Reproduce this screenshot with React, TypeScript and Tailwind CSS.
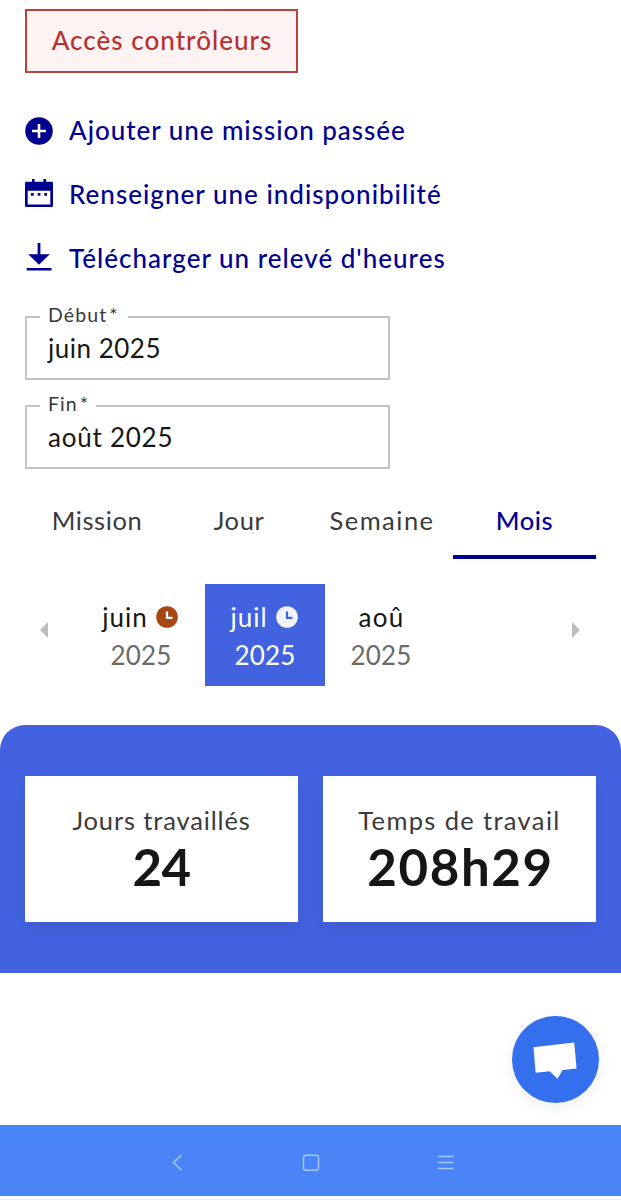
import React from "react";

function PlusCircle() {
  return (
    <svg width="28" height="28" viewBox="0 0 28 28">
      <circle cx="14" cy="14" r="13.8" fill="#000091" />
      <path d="M14 7v14M7 14h14" stroke="#fff" strokeWidth="2.6" />
    </svg>
  );
}

function CalendarIcon() {
  return (
    <svg className="-mt-[4px]" width="28" height="28" viewBox="0 0 28 28" fill="#000091">
      <path
        fillRule="evenodd"
        d="M7 0h2.600v2.800h8.800V0H21v2.800h5.700A1.300 1.300 0 0 1 28 4.100V26.700A1.300 1.300 0 0 1 26.700 28H1.300A1.300 1.300 0 0 1 0 26.700V4.100A1.300 1.300 0 0 1 1.300 2.800H7zM2.700 11.800v13.600h22.600V11.800z"
      />
      <path d="M6 14h2.700v2.700H6zM12.700 14h2.700v2.700h-2.700zM19.300 14H22v2.700h-2.700z" />
    </svg>
  );
}

function DownloadIcon() {
  return (
    <svg className="-mt-[4px]" width="28" height="28" viewBox="0 0 28 28" fill="#000091">
      <path d="M12.600 0h2.800v11.200h9.400L14 21.800 3.200 11.200h9.400zM1.700 25h24.800v2.600H1.700z" />
    </svg>
  );
}

function ClockIcon({ disc, hand }: { disc: string; hand: string }) {
  return (
    <svg width="22" height="22" viewBox="0 0 22 22">
      <circle cx="11" cy="11" r="10.8" fill={disc} />
      <path d="M11 5.5v6.400h5.400" fill="none" stroke={hand} strokeWidth="2.2" />
    </svg>
  );
}

const links = [
  { label: "Ajouter une mission passée", icon: <PlusCircle />, spacing: "tracking-[0.96px]" },
  { label: "Renseigner une indisponibilité", icon: <CalendarIcon />, spacing: "tracking-[1.02px]" },
  { label: "Télécharger un relevé d'heures", icon: <DownloadIcon />, spacing: "tracking-[1.01px]" },
];

function MonthField({ label, value, labelWidth, valueSpacing }: { label: string; value: string; labelWidth: string; valueSpacing: string }) {
  return (
    <div className="relative flex h-16 w-[365px] items-center border-2 border-[#c3c3c3] pl-[21px]">
      <span className={`absolute -top-[17px] left-[13px] h-7 bg-white pl-2 text-[19.5px] leading-7 tracking-[1.1px] text-[#3a3a3a] ${labelWidth}`}>
        {label}
        <span className="ml-0.5">*</span>
      </span>
      <span className={`text-[26px] leading-8 text-[#161616] ${valueSpacing}`}>{value}</span>
    </div>
  );
}

function Stat({ label, value, labelSpacing, valueSpacing }: { label: string; value: string; labelSpacing: string; valueSpacing: string }) {
  return (
    <div className="flex h-[146px] w-[273px] flex-col items-center bg-white pt-[26px] shadow-[0_9px_20px_rgba(0,0,18,0.07)]">
      <div className={`text-[25.5px] leading-[36px] text-[#3a3a3a] ${labelSpacing}`}>{label}</div>
      <div className={`text-[51px] leading-[58px] font-bold text-[#161616] ${valueSpacing}`}>{value}</div>
    </div>
  );
}

export default function App() {
  return (
    <div className="flex h-[1200px] w-[621px] flex-col overflow-hidden bg-white font-['Lato','Noto_Sans',sans-serif] whitespace-nowrap">
      <main className="relative flex h-[1125px] flex-col">
        <button className="mt-[9px] ml-[25px] flex h-16 w-[273px] items-center justify-center border-2 border-[#b5433f] bg-[#fcf3f2] pb-0.5 pl-px text-[26px] font-medium tracking-[1.02px] text-[#b5322f]">
          Accès contrôleurs
        </button>

        <nav className="mt-[26px] ml-[25px] flex flex-col">
          {links.map((l) => (
            <a key={l.label} className="flex h-16 items-center gap-4 text-[26px] font-medium text-[#000091]">
              {l.icon}
              <span className={`pb-px ${l.spacing}`}>{l.label}</span>
            </a>
          ))}
        </nav>

        <div className="mt-[25px] ml-[25px] flex flex-col gap-[25px]">
          <MonthField label="Début" value="juin 2025" labelWidth="w-[88px]" valueSpacing="tracking-[0.5px]" />
          <MonthField label="Fin" value="août 2025" labelWidth="w-[56px]" valueSpacing="tracking-[0.75px]" />
        </div>

        <div className="mx-[25px] mt-[13px] flex h-[77px] text-[25.5px] text-[#3a3a3a]">
          <div className="flex w-[143px] items-center justify-center pl-px tracking-[0.6px]">Mission</div>
          <div className="flex w-[142px] items-center justify-center tracking-[0.6px]">Jour</div>
          <div className="flex w-[143px] items-center justify-center pl-px tracking-[1.5px]">Semaine</div>
          <div className="flex w-[143px] items-center justify-center border-b-4 border-[#000091] pt-1 font-medium tracking-[0.6px] text-[#000091]">
            Mois
          </div>
        </div>

        <div className="mt-[25px] flex h-[102px] items-center pl-[39px] text-[26px] leading-[38px]">
          <svg className="-mt-[10px]" width="10" height="16" viewBox="0 0 10 16">
            <path d="M9 0v16L1 8z" fill="#bdbdbd" />
          </svg>
          <div className="ml-[35px] flex w-[113px] flex-col items-center pt-px">
            <div className="flex items-center gap-2 pr-px text-[#161616]">
              <span className="tracking-[1px]">juin</span>
              <ClockIcon disc="#a94616" hand="#fff" />
            </div>
            <span className="pl-px tracking-[0.2px] text-[#6a6a6a]">2025</span>
          </div>
          <div className="ml-2 flex h-[102px] w-[120px] flex-col items-center justify-center bg-[#4262e0] pt-px text-white">
            <div className="flex items-center gap-2 pr-0.5">
              <span className="tracking-[1px]">juil</span>
              <ClockIcon disc="#f2f4fd" hand="#4262e0" />
            </div>
            <span className="tracking-[0.2px]">2025</span>
          </div>
          <div className="ml-2 flex w-[96px] flex-col items-center pt-px">
            <span className="pl-px tracking-[1.2px] text-[#161616]">aoû</span>
            <span className="tracking-[0.2px] text-[#6a6a6a]">2025</span>
          </div>
          <svg className="-mt-[10px] ml-[142px]" width="10" height="16" viewBox="0 0 10 16">
            <path d="M1 0v16l8-8z" fill="#bdbdbd" />
          </svg>
        </div>

        <section className="mt-[39px] flex h-[248px] items-center gap-[25px] rounded-t-[25px] bg-[#4262e0] pl-[25px]">
          <Stat label="Jours travaillés" value="24" labelSpacing="tracking-[0.85px]" valueSpacing="tracking-[-0.5px]" />
          <Stat label="Temps de travail" value="208h29" labelSpacing="tracking-[1.35px]" valueSpacing="pl-0.5 tracking-[1.6px]" />
        </section>

        <button className="absolute right-[22px] bottom-[22px] size-[87px] rounded-full bg-[#346fee] shadow-[0_4px_16px_rgba(0,0,0,0.07)]">
          <svg width="87" height="87" viewBox="0 0 87 87">
            <path d="M21.500 31.200 62.200 26.500l2.400 26-14 1.500-5.200 8.800-7.700-7.500-14.100 1.400z" fill="#fff" />
          </svg>
        </button>
      </main>

      <footer className="h-[71px] bg-[#4a84f6]">
        <svg width="621" height="71" viewBox="0 0 621 71" fill="none" stroke="#a5c8fb" strokeWidth="1.5">
          <path d="m181.500 30-8 7.600 8 7.600" />
          <rect x="303.500" y="30.200" width="15" height="15" rx="2.500" />
          <path d="M438 31.500h15.600M438 37.600h15.600M438 43.500h15.600" />
        </svg>
      </footer>
      <div className="mt-[3px] h-px bg-[#eef1ee]" />
    </div>
  );
}
